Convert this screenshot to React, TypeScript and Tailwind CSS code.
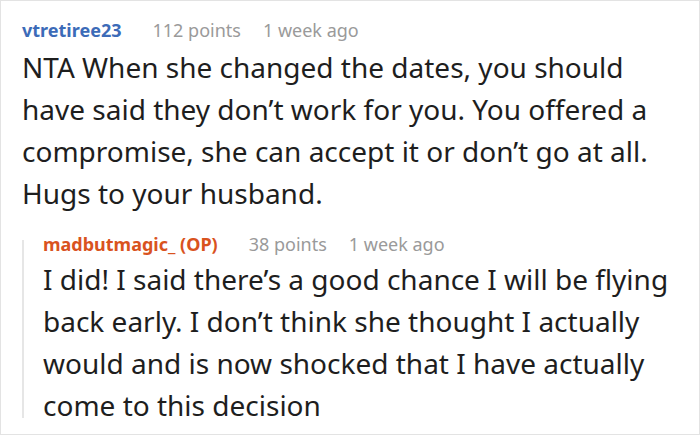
export default function App() {
  return (
    <div className="w-[700px] h-[436px] bg-white overflow-hidden" style={{ fontFamily: '"Noto Sans", "Open Sans", sans-serif' }}>
      <div className="h-[435px] border border-[#e3e3e3] pl-[21px] pr-4 pt-[15px]">
        {/* parent comment */}
        <div className="flex items-baseline text-[18px] leading-[28px]">
          <span className="font-bold text-[#3c6bb8] mr-[31px]">vtretiree23</span>
          <span className="text-[#9a9a9a] mr-[22px]">112 points</span>
          <span className="text-[#9a9a9a]">1 week ago</span>
        </div>
        <p className="text-[28px] leading-[42px] text-[#1e1e1e] mt-[2px] w-[655px]">
          NTA When she changed the dates, you should have said they don’t work for you. You offered a compromise, she can accept it or don’t go at all. Hugs to your husband.
        </p>

        {/* reply */}
        <div className="mt-[17px] flex items-start">
          <div className="mt-[9px] h-[178px] w-[2px] shrink-0 bg-[#e6e6e6]" />
          <div className="pl-[19px]">
            <div className="flex items-baseline text-[18px] leading-[27px]">
              <span className="font-bold text-[#d9531e] mr-[31px]">madbutmagic_ (OP)</span>
              <span className="text-[#9a9a9a] mr-[22px]">38 points</span>
              <span className="text-[#9a9a9a]">1 week ago</span>
            </div>
            <p className="text-[28px] leading-[42px] text-[#1e1e1e] w-[630px]">
              I did! I said there’s a good chance I will be flying back early. I don’t think she thought I actually would and is now shocked that I have actually come to this decision
            </p>
          </div>
        </div>
      </div>
    </div>
  );
}
